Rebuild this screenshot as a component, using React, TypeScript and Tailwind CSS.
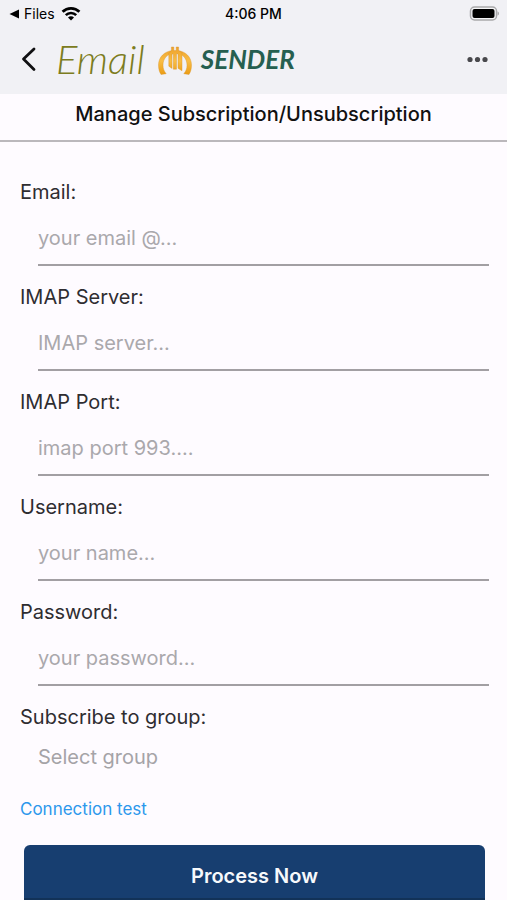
import { useState } from "react";

const fields = [
  { id: "email", label: "Email:", type: "email", placeholder: "your email @..." },
  { id: "server", label: "IMAP Server:", type: "text", placeholder: "IMAP server..." },
  { id: "port", label: "IMAP Port:", type: "text", placeholder: "imap port 993...." },
  { id: "username", label: "Username:", type: "text", placeholder: "your name..." },
  { id: "password", label: "Password:", type: "password", placeholder: "your password..." },
];

function StatusBar() {
  return (
    <div className="grid h-7 grid-cols-3 items-center px-2 text-black">
      <div className="flex items-center gap-1 text-sm">
        <svg className="h-3 w-3" viewBox="0 0 12 12" fill="currentColor" aria-hidden="true">
          <path d="M1.5 6 11 1.5v9z" />
        </svg>
        <span>Files</span>
        <svg className="ml-0.5 h-4 w-5" viewBox="0 0 20 16" fill="none" aria-hidden="true">
          <path d="M1.6 5.8a12 12 0 0 1 16.8 0" stroke="currentColor" strokeWidth="2.8" />
          <path d="M4.8 9.2a7.4 7.4 0 0 1 10.4 0" stroke="currentColor" strokeWidth="2.6" />
          <path d="M10 14.6 7 11.6a4.2 4.2 0 0 1 6 0z" fill="currentColor" />
        </svg>
      </div>
      <span className="text-center text-sm font-medium">4:06 PM</span>
      <svg className="h-4 w-8 justify-self-end" viewBox="0 0 32 16" aria-hidden="true">
        <rect x="3.5" y="1" width="26" height="13" rx="4" fill="#f5f5f7" stroke="#a9a9ab" strokeWidth="1.5" />
        <rect x="5.5" y="3" width="22" height="9" rx="2" fill="#000" />
        <path d="M30.5 5.5c2 .5 2 3.5 0 4z" fill="#a9a9ab" />
      </svg>
    </div>
  );
}

function Logo() {
  return (
    <div className="flex items-center gap-2">
      <span className="pr-1 font-[Lato,sans-serif] text-[40px] leading-10 font-light text-[#7c7c20] italic">Email</span>
      <svg className="mt-1 h-8 w-9" viewBox="0 0 36 32" fill="none" aria-hidden="true">
        <defs>
          <linearGradient id="gold" gradientUnits="userSpaceOnUse" x1="0" y1="2" x2="0" y2="30">
            <stop offset="0" stopColor="#eda02a" />
            <stop offset="0.5" stopColor="#f9bd45" />
            <stop offset="1" stopColor="#ea9a12" />
          </linearGradient>
        </defs>
        <g fill="url(#gold)" stroke="#d8952c" strokeWidth="0.4">
          {/* outer arms */}
          <path d="M16 5.5C7.500 6 1.500 12.200 1.500 20c0 3.800.8 6.800 2.500 9.500l5.200-.8C7 26.300 6 23.500 6 20.200 6 13.800 9.800 9.300 16 8.500z" />
          <path d="M20 5.500C28.500 6 34.500 12.200 34.500 20c0 3.800-.8 6.800-2.500 9.500l-5.200-.8c2.200-2.400 3.200-5.200 3.200-8.500 0-6.400-3.800-10.900-10-11.700z" />
          {/* centre bars */}
          <path d="M14.400 2h2.400v3.500h2.400V2h2.400v3.700L25 7.500v18.300l-4-2.600V8.800h-1.500v15.400h-3.200V8.800l-1.300.4v14.200l-3.200-2.200V8l2.600-2z" />
        </g>
      </svg>
      <span className="font-[Lato,sans-serif] text-[26px] leading-10 font-bold text-[#265f50] italic">SENDER</span>
    </div>
  );
}

export default function App() {
  const [group, setGroup] = useState("");

  return (
    <div className="bg-[#fefbff] font-[Inter,sans-serif] text-[#2f2d31]">
      <header className="bg-[#f1f1f5] pb-3">
        <StatusBar />
        <div className="flex h-[54px] items-center px-4 pt-2">
          <button type="button" aria-label="Back" className="mr-3 flex h-10 w-7 items-center justify-start">
            <svg className="h-7 w-5" viewBox="0 0 20 28" fill="none" stroke="#101012" strokeWidth="2.8" aria-hidden="true">
              <path d="M18 4 7.5 14 18 24.5" strokeLinecap="round" strokeLinejoin="round" />
            </svg>
          </button>
          <Logo />
          <button type="button" aria-label="More" className="ml-auto flex h-10 w-7 items-center justify-center">
            <svg className="h-6 w-6" viewBox="0 0 24 24" fill="#48484c" aria-hidden="true">
              <circle cx="5" cy="12.5" r="2.6" />
              <circle cx="12.5" cy="12.5" r="2.6" />
              <circle cx="20" cy="12.5" r="2.6" />
            </svg>
          </button>
        </div>
      </header>

      <h1 className="flex h-12 items-center justify-center border-b-2 border-[#bbb8bc] pb-1.5 text-xl font-medium text-[#111]">
        Manage Subscription/Unsubscription
      </h1>

      <form className="pt-[35px] pr-[18px] pl-5" onSubmit={(e) => e.preventDefault()}>
        {fields.map((field) => (
          <div key={field.id} className="mb-4">
            <label htmlFor={field.id} className="block text-xl leading-[30px]">
              {field.label}
            </label>
            <div className="pl-[18px]">
              <input
                id={field.id}
                type={field.type}
                placeholder={field.placeholder}
                className="block h-[59px] w-full border-b-2 border-[#a29fa3] pt-1 text-xl outline-none placeholder:text-[#aaa8ac]"
              />
            </div>
          </div>
        ))}

        <label htmlFor="group" className="block text-xl leading-[30px]">
          Subscribe to group:
        </label>
        <select
          id="group"
          value={group}
          onChange={(e) => setGroup(e.target.value)}
          className="block h-[50px] w-full appearance-none bg-transparent pl-[18px] text-xl text-[#a5a3a7] outline-none"
        >
          <option value="">Select group</option>
        </select>

        <a href="#test" className="mt-3 inline-block text-[17px] leading-[30px] text-[#2c98ec]">
          Connection test
        </a>

        <div className="mt-[21px] px-1">
          <button
            type="submit"
            className="block h-[55px] w-full rounded-t-md border-b-2 border-[#123258] bg-[#173e70] pt-2 text-xl font-semibold text-[#f7f9fc]"
          >
            Process Now
          </button>
        </div>
      </form>
    </div>
  );
}
